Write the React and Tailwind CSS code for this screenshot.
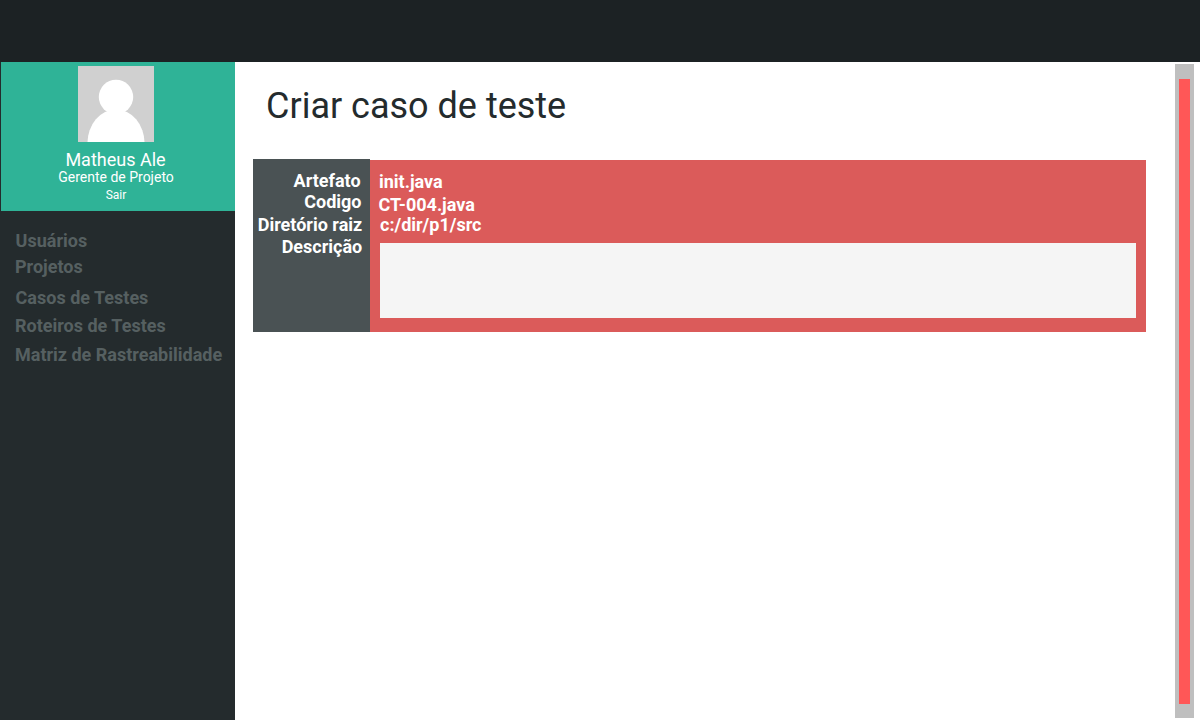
const navItems = [
  { label: 'Usuários', spacing: 'mt-5 ml-[15.6px]' },
  { label: 'Projetos', spacing: 'mt-1.5 ml-[15px]' },
  { label: 'Casos de Testes', spacing: 'mt-[11px] ml-[15.6px]' },
  { label: 'Roteiros de Testes', spacing: 'mt-2 ml-[15px]' },
  { label: 'Matriz de Rastreabilidade', spacing: 'mt-[9px] ml-[15px]' },
];

function Avatar() {
  return (
    <svg className="block h-[76px] w-[76px] bg-[#d0d0d0]" viewBox="0 0 76 76" fill="#fff" aria-hidden="true">
      <circle cx="38" cy="31" r="17.2" />
      <ellipse cx="38" cy="77" rx="28.5" ry="33.5" />
    </svg>
  );
}

function Sidebar() {
  return (
    <aside className="w-[235px] shrink-0 bg-[#242b2d]">
      <section className="ml-px flex h-[149px] flex-col items-center bg-[#2fb397] pt-1 pr-1 text-white">
        <Avatar />
        <p className="mt-2 mr-px text-[18px] leading-5">Matheus Ale</p>
        <p className="text-[14px] leading-[14px]">Gerente de Projeto</p>
        <a className="mt-1 text-[12px] leading-[14px]">Sair</a>
      </section>
      <nav className="flex flex-col text-[18px] leading-5 font-bold whitespace-nowrap text-[#566061]">
        {navItems.map((item) => (
          <a key={item.label} className={item.spacing}>{item.label}</a>
        ))}
      </nav>
    </aside>
  );
}

function TestCase() {
  return (
    <section className="ml-[18px] flex w-[893px] items-end text-[18px] leading-5 font-bold whitespace-nowrap text-white">
      <div className="flex h-[173px] w-[117px] flex-col items-end bg-[#4a5254] pt-3 pr-[7px]">
        <span className="mr-[2.4px]">Artefato</span>
        <span className="mt-px mr-[1.5px]">Codigo</span>
        <span className="mt-[3px] mr-[0.8px]">Diretório raiz</span>
        <span className="mt-0.5 mr-[0.8px]">Descrição</span>
      </div>
      <div className="flex h-[172px] flex-1 flex-col bg-[#db5b5a] pt-3 pr-2.5 pl-[9px]">
        <span>init.java</span>
        <span className="mt-[3px] -ml-[0.6px]">CT-004.java</span>
        <span className="ml-px">c:/dir/p1/src</span>
        <textarea className="mt-2 ml-px h-[75px] resize-none bg-[#f5f5f5] outline-none" aria-label="Descrição" />
      </div>
    </section>
  );
}

export default function App() {
  return (
    <div className="flex h-[720px] w-[1200px] flex-col overflow-hidden bg-white font-['Roboto',sans-serif]">
      <header className="h-[62px] shrink-0 bg-[#1c2224]" />
      <div className="flex min-h-0 flex-1">
        <Sidebar />
        <main className="flex-1">
          <h1 className="mt-[22px] mb-[31px] ml-[31px] text-[36px] leading-[44px] text-[#242b2d]">Criar caso de teste</h1>
          <TestCase />
        </main>
        <div className="mt-0.5 mr-1.5 h-[654px] w-[19px] bg-[#bfbfbf] pt-[15px] pl-1">
          <div className="h-[625px] w-[11px] bg-[#ff5757]" />
        </div>
      </div>
    </div>
  );
}
